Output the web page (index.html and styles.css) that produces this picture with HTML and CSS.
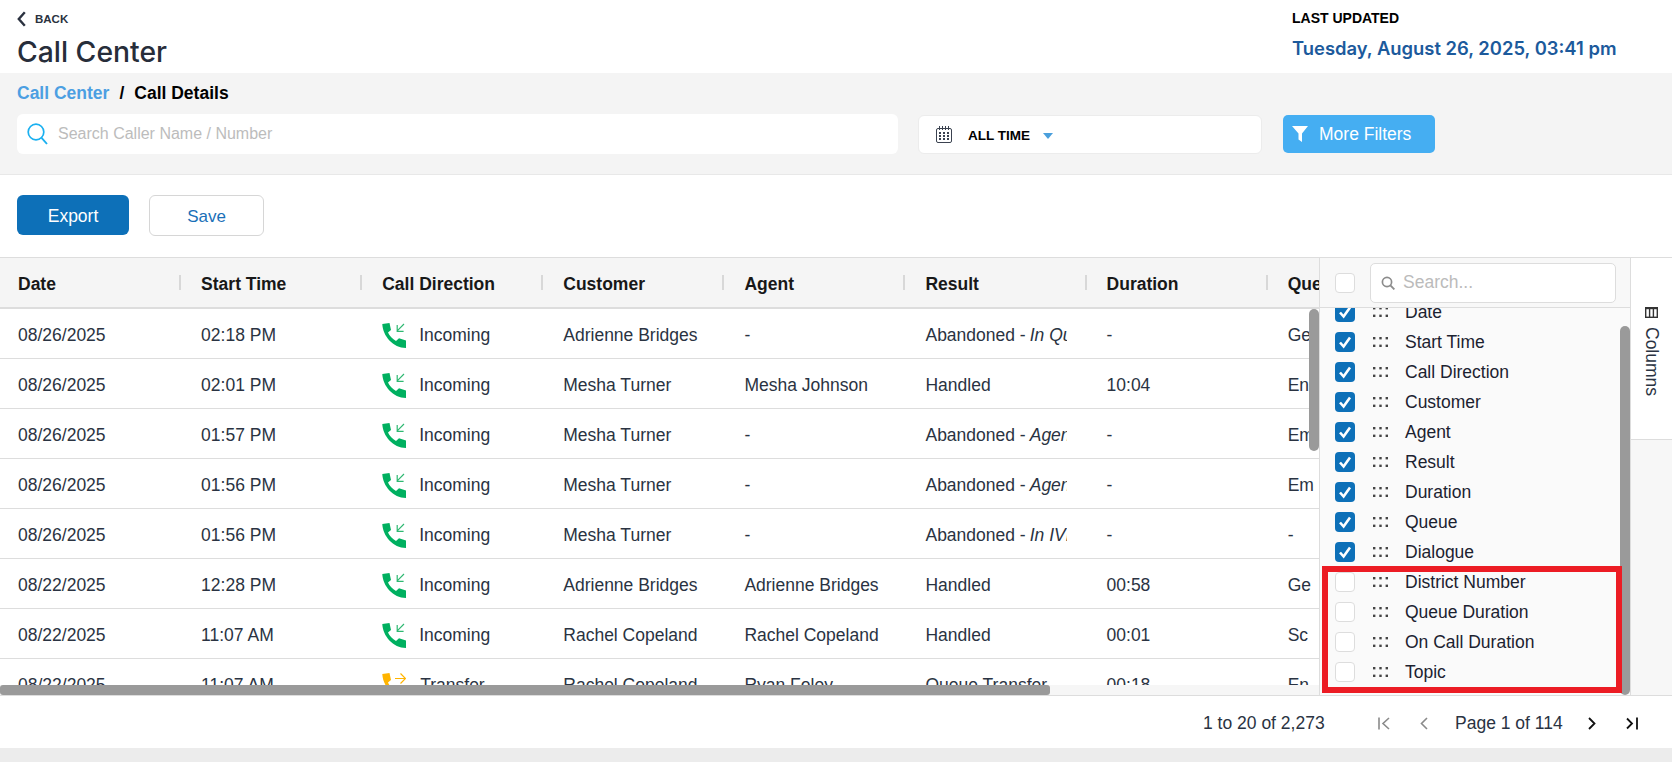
FILE: index.html
```html
<!DOCTYPE html>
<html lang="en">
<head>
<meta charset="utf-8">
<title>Call Center</title>
<link rel="stylesheet" href="styles.css">
</head>
<body>
<svg class="defs" width="0" height="0" aria-hidden="true">
  <symbol id="ph-in" viewBox="0 0 24 25">
    <path fill="#00b060" d="M0.3 1 L7.5 0 L9 7 L6 9.5 C7.5 13 10.5 16 14 18 L17 15.3 L24 17.5 V25 C11 25 0.8 13 0.3 1Z"/>
    <path fill="none" stroke="#2fb872" stroke-width="1.2" d="M22 1 L15.2 7.8 M15.2 2 V8.4 H21.6"/>
  </symbol>
  <symbol id="ph-tr" viewBox="0 0 24 25">
    <path fill="#ffb400" d="M0.3 1 L7.5 0 L9 7 L6 9.5 C7.5 13 10.5 16 14 18 L17 15.3 L24 17.5 V25 C11 25 0.8 13 0.3 1Z"/>
    <path fill="none" stroke="#ffb400" stroke-width="1.2" d="M13 5.5 H23.5 M18.5 0.5 L23.5 5.5 L18.5 10.5"/>
  </symbol>
  <symbol id="grip" viewBox="0 0 15 10">
    <g fill="#444"><rect x="0" y="0" width="2.4" height="2.4"/><rect x="6.3" y="0" width="2.4" height="2.4"/><rect x="12.6" y="0" width="2.4" height="2.4"/><rect x="0" y="7.6" width="2.4" height="2.4"/><rect x="6.3" y="7.6" width="2.4" height="2.4"/><rect x="12.6" y="7.6" width="2.4" height="2.4"/></g>
  </symbol>
  <symbol id="chk" viewBox="0 0 20 20">
    <path fill="none" stroke="#fff" stroke-width="2.6" d="M5 10.5 L8.6 14.5 L15 5.5"/>
  </symbol>
</svg>

<header class="top">
  <div class="top-left">
    <div class="back">
      <svg class="back-ic" viewBox="0 0 9 16"><path fill="none" stroke="#2b3240" stroke-width="2.4" d="M7.8 1.2 L1.8 8 L7.8 14.8"/></svg>
      <span>BACK</span>
    </div>
    <h1 class="title">Call Center</h1>
  </div>
  <div class="updated">
    <div class="updated-label">LAST UPDATED</div>
    <div class="updated-date">Tuesday, August 26, 2025, 03:41 pm</div>
  </div>
</header>

<section class="filters">
  <nav class="crumbs"><span class="crumb-link">Call Center</span><span class="crumb-sep">/</span><span class="crumb-now">Call Details</span></nav>
  <div class="filter-row">
    <div class="search">
      <svg class="search-ic" viewBox="0 0 21 22"><circle cx="9" cy="9" r="7.8" fill="none" stroke="#1ab0f0" stroke-width="1.7"/><path stroke="#1ab0f0" stroke-width="1.9" d="M14.6 14.8 L20 21"/></svg>
      <span class="search-ph">Search Caller Name / Number</span>
    </div>
    <div class="date-box">
      <svg class="cal-ic" viewBox="0 0 16 17"><g fill="none" stroke="#3b4250"><rect x="0.5" y="2.5" width="15" height="14" rx="1.5"/><path d="M3.5 0 V4 M6.5 0 V4 M9.5 0 V4 M12.5 0 V4"/></g><g fill="#3b4250"><rect x="3" y="6" width="2" height="2"/><rect x="7" y="6" width="2" height="2"/><rect x="11" y="6" width="2" height="2"/><rect x="3" y="9" width="2" height="2"/><rect x="7" y="9" width="2" height="2"/><rect x="11" y="9" width="2" height="2"/><rect x="3" y="12" width="2" height="2"/><rect x="7" y="12" width="2" height="2"/><rect x="11" y="12" width="2" height="2"/></g></svg>
      <span class="date-label">ALL TIME</span>
      <span class="caret"></span>
    </div>
    <div class="more">
      <svg class="funnel" viewBox="0 0 16 16"><path fill="#fff" d="M0 0 H16 L10 7.5 V16 L6.5 13.5 V7.5Z"/></svg>
      <span>More Filters</span>
    </div>
  </div>
</section>

<section class="actions">
  <div class="btn btn-primary">Export</div>
  <div class="btn btn-outline">Save</div>
</section>

<section class="grid-shell">
  <div class="grid-main">
    <div class="grow ghead">
      <div class="hcell">Date</div><div class="hcell">Start Time</div><div class="hcell">Call Direction</div><div class="hcell">Customer</div><div class="hcell">Agent</div><div class="hcell">Result</div><div class="hcell">Duration</div><div class="hcell">Queue</div>
    </div>
    <div class="gbody">
      <div class="grow"><div class="cell">08/26/2025</div><div class="cell">02:18 PM</div><div class="cell dir"><svg class="ph"><use href="#ph-in"/></svg>Incoming</div><div class="cell">Adrienne Bridges</div><div class="cell">-</div><div class="cell">Abandoned - <i>In Queue</i></div><div class="cell">-</div><div class="cell">Ge</div></div>
      <div class="grow"><div class="cell">08/26/2025</div><div class="cell">02:01 PM</div><div class="cell dir"><svg class="ph"><use href="#ph-in"/></svg>Incoming</div><div class="cell">Mesha Turner</div><div class="cell">Mesha Johnson</div><div class="cell">Handled</div><div class="cell">10:04</div><div class="cell">En</div></div>
      <div class="grow"><div class="cell">08/26/2025</div><div class="cell">01:57 PM</div><div class="cell dir"><svg class="ph"><use href="#ph-in"/></svg>Incoming</div><div class="cell">Mesha Turner</div><div class="cell">-</div><div class="cell">Abandoned - <i>Agent</i></div><div class="cell">-</div><div class="cell">Em</div></div>
      <div class="grow"><div class="cell">08/26/2025</div><div class="cell">01:56 PM</div><div class="cell dir"><svg class="ph"><use href="#ph-in"/></svg>Incoming</div><div class="cell">Mesha Turner</div><div class="cell">-</div><div class="cell">Abandoned - <i>Agent</i></div><div class="cell">-</div><div class="cell">Em</div></div>
      <div class="grow"><div class="cell">08/26/2025</div><div class="cell">01:56 PM</div><div class="cell dir"><svg class="ph"><use href="#ph-in"/></svg>Incoming</div><div class="cell">Mesha Turner</div><div class="cell">-</div><div class="cell">Abandoned - <i>In IVR</i></div><div class="cell">-</div><div class="cell">-</div></div>
      <div class="grow"><div class="cell">08/22/2025</div><div class="cell">12:28 PM</div><div class="cell dir"><svg class="ph"><use href="#ph-in"/></svg>Incoming</div><div class="cell">Adrienne Bridges</div><div class="cell">Adrienne Bridges</div><div class="cell">Handled</div><div class="cell">00:58</div><div class="cell">Ge</div></div>
      <div class="grow"><div class="cell">08/22/2025</div><div class="cell">11:07 AM</div><div class="cell dir"><svg class="ph"><use href="#ph-in"/></svg>Incoming</div><div class="cell">Rachel Copeland</div><div class="cell">Rachel Copeland</div><div class="cell">Handled</div><div class="cell">00:01</div><div class="cell">Sc</div></div>
      <div class="grow"><div class="cell">08/22/2025</div><div class="cell">11:07 AM</div><div class="cell dir dir-tr"><svg class="ph"><use href="#ph-tr"/></svg>Transfer</div><div class="cell">Rachel Copeland</div><div class="cell">Ryan Foley</div><div class="cell">Queue Transfer</div><div class="cell">00:18</div><div class="cell">En</div></div>
    </div>
    <div class="hbar"><div class="hthumb"></div></div>
    <div class="vthumb"></div>
  </div>

  <aside class="panel">
    <div class="panel-head">
      <span class="box"></span>
      <div class="panel-search">
        <svg class="ps-ic" viewBox="0 0 14 14"><circle cx="6" cy="6" r="4.6" fill="none" stroke="#8c8c8c" stroke-width="1.7"/><path stroke="#8c8c8c" stroke-width="1.9" d="M9.4 9.4 L13.4 13.4"/></svg>
        <span>Search...</span>
      </div>
    </div>
    <div class="panel-list">
      <div class="pitems">
        <div class="pitem"><span class="box on"><svg class="chk"><use href="#chk"/></svg></span><svg class="grip"><use href="#grip"/></svg><span>Date</span></div>
        <div class="pitem"><span class="box on"><svg class="chk"><use href="#chk"/></svg></span><svg class="grip"><use href="#grip"/></svg><span>Start Time</span></div>
        <div class="pitem"><span class="box on"><svg class="chk"><use href="#chk"/></svg></span><svg class="grip"><use href="#grip"/></svg><span>Call Direction</span></div>
        <div class="pitem"><span class="box on"><svg class="chk"><use href="#chk"/></svg></span><svg class="grip"><use href="#grip"/></svg><span>Customer</span></div>
        <div class="pitem"><span class="box on"><svg class="chk"><use href="#chk"/></svg></span><svg class="grip"><use href="#grip"/></svg><span>Agent</span></div>
        <div class="pitem"><span class="box on"><svg class="chk"><use href="#chk"/></svg></span><svg class="grip"><use href="#grip"/></svg><span>Result</span></div>
        <div class="pitem"><span class="box on"><svg class="chk"><use href="#chk"/></svg></span><svg class="grip"><use href="#grip"/></svg><span>Duration</span></div>
        <div class="pitem"><span class="box on"><svg class="chk"><use href="#chk"/></svg></span><svg class="grip"><use href="#grip"/></svg><span>Queue</span></div>
        <div class="pitem"><span class="box on"><svg class="chk"><use href="#chk"/></svg></span><svg class="grip"><use href="#grip"/></svg><span>Dialogue</span></div>
        <div class="pitem"><span class="box"></span><svg class="grip"><use href="#grip"/></svg><span>District Number</span></div>
        <div class="pitem"><span class="box"></span><svg class="grip"><use href="#grip"/></svg><span>Queue Duration</span></div>
        <div class="pitem"><span class="box"></span><svg class="grip"><use href="#grip"/></svg><span>On Call Duration</span></div>
        <div class="pitem"><span class="box"></span><svg class="grip"><use href="#grip"/></svg><span>Topic</span></div>
      </div>
      <div class="pthumb"></div>
    </div>
    <div class="redbox"></div>
  </aside>

  <div class="side">
    <div class="side-tab">
      <svg class="cols-ic" viewBox="0 0 13 11"><g fill="none" stroke="#333" stroke-width="1.4"><rect x="0.7" y="0.7" width="11.6" height="9.6"/><path d="M4.6 1 V10 M8.4 1 V10"/></g><rect width="13" height="2.2" fill="#333"/></svg>
      <span class="cols-label">Columns</span>
    </div>
  </div>
</section>

<footer class="pager">
  <span class="count">1 to 20 of 2,273</span>
  <svg class="pg pg-first" viewBox="0 0 12 13"><path fill="none" stroke="#8a8a8a" stroke-width="1.6" d="M1 0.5 V12.5 M11 1 L5 6.5 L11 12"/></svg>
  <svg class="pg pg-prev" viewBox="0 0 8 13"><path fill="none" stroke="#8a8a8a" stroke-width="1.6" d="M7 1 L1.5 6.5 L7 12"/></svg>
  <span class="page-text">Page 1 of 114</span>
  <svg class="pg pg-next" viewBox="0 0 8 13"><path fill="none" stroke="#111" stroke-width="1.8" d="M1 1 L6.5 6.5 L1 12"/></svg>
  <svg class="pg pg-last" viewBox="0 0 12 13"><path fill="none" stroke="#111" stroke-width="1.8" d="M1 1.5 L6 6.5 L1 11.5 M11 0.5 V12.5"/></svg>
</footer>
<div class="bottom-strip"></div>
</body>
</html>
```

FILE: styles.css
```css
* { box-sizing: border-box; }
html, body { margin: 0; padding: 0; }
body {
  width: 1672px;
  height: 762px;
  overflow: hidden;
  background: #fff;
  font-family: "Liberation Sans", Arial, sans-serif;
  font-size: 17.5px;
  color: #2a3342;
  display: flex;
  flex-direction: column;
}
.defs { position: absolute; }

/* header */
.top {
  height: 73px;
  flex: none;
  display: flex;
  justify-content: space-between;
  padding: 11px 0 0 17px;
}
.back { display: flex; align-items: center; gap: 9px; height: 16px; font-size: 11.5px; font-weight: 700; color: #2b3240; }
.back-ic { width: 9px; height: 16px; }
.title { margin: 9px 0 0; font-family: Inter, sans-serif; font-weight: 500; font-size: 28.3px; line-height: 32px; color: #272d3a; }
.updated { width: 380px; }
.updated-label { font-size: 14px; font-weight: 700; color: #000; line-height: 14px; }
.updated-date { margin-top: 11px; font-family: Inter, sans-serif; font-weight: 600; font-size: 18.4px; line-height: 24px; color: #1c5a9c; }

/* filter bar */
.filters {
  height: 102px;
  flex: none;
  background: #f4f4f4;
  border-bottom: 1px solid #e8e8e8;
  padding: 10px 0 0 17px;
}
.crumbs { display: flex; gap: 10px; font-weight: 700; font-size: 17.5px; line-height: 20px; color: #000; }
.crumb-link { color: #4c9fe2; }
.filter-row { display: flex; align-items: center; margin-top: 11px; }
.search {
  width: 881px; height: 40px;
  background: #fff; border-radius: 6px;
  display: flex; align-items: center;
  padding-left: 10px;
}
.search-ic { width: 21px; height: 22px; }
.search-ph { margin-left: 10px; font-size: 16px; color: #bcbcbc; }
.date-box {
  width: 344px; height: 39px; margin-left: 20px;
  background: #fff; border: 1px solid #ececec; border-radius: 6px;
  display: flex; align-items: center; padding-left: 17px;
}
.cal-ic { width: 16px; height: 17px; }
.date-label { margin: 2px 0 0 16px; font-size: 13.5px; font-weight: 700; color: #000; }
.caret { margin-left: 13px; margin-top: 3px; border-left: 5px solid transparent; border-right: 5px solid transparent; border-top: 6px solid #4a9fdc; }
.more {
  width: 152px; height: 38px; margin-left: 21px;
  background: #45aef2; border-radius: 5px;
  display: flex; align-items: center; padding-left: 9px; gap: 11px;
  color: #fff; font-size: 17.5px;
}
.funnel { width: 16px; height: 16px; }

/* actions */
.actions { height: 82px; flex: none; display: flex; align-items: flex-start; gap: 20px; padding: 20px 0 0 17px; }
.btn { height: 40px; padding-top: 2px; border-radius: 6px; display: flex; align-items: center; justify-content: center; font-size: 17.5px; }
.btn-primary { width: 112px; background: #0d70b8; color: #fff; }
.btn-outline { width: 115px; height: 41px; background: #fff; border: 1px solid #d6d6d6; color: #1a70b8; font-size: 17px; }

/* grid */
.grid-shell { height: 439px; flex: none; display: flex; border-top: 1px solid #ddd; border-bottom: 1px solid #ddd; position: relative; }
.grid-main { width: 1319px; flex: none; position: relative; overflow: hidden; }
.grow { display: grid; grid-template-columns: repeat(8, 181.1px); height: 50px; border-bottom: 1px solid #ddd; }
.ghead { background: #f5f5f5; height: 51px; border-bottom: 2px solid #ddd; }
.hcell { position: relative; display: flex; align-items: center; padding: 3px 0 0 20px; font-weight: 700; color: #181818; }
.hcell:first-child, .cell:first-child { padding-left: 18px; }
.hcell::after { content: ""; position: absolute; right: 0; top: 17px; width: 2px; height: 15px; background: #d8d8d8; }
.gbody { height: 376px; overflow: hidden; }
.cell { display: flex; align-items: center; gap: 4px; padding: 3px 0 0 20px; width: 162px; overflow: hidden; white-space: nowrap; }
.cell i { font-style: italic; }
.dir { gap: 13px; width: 181px; }
.dir-tr { gap: 14px; }
.ph { width: 24px; height: 25px; flex: none; }
.hbar { height: 10px; background: #f6f6f6; }
.hthumb { width: 1050px; height: 10px; background: #9a9a9a; border-radius: 3px; }
.vthumb { position: absolute; left: 1309px; top: 51px; width: 10px; height: 142px; background: #9a9a9a; border-radius: 5px; }

/* column panel */
.panel { width: 312px; flex: none; border-left: 1px solid #ddd; border-right: 1px solid #ddd; background: #fafafa; display: flex; flex-direction: column; position: relative; }
.panel-head { height: 50px; flex: none; display: flex; align-items: center; gap: 15px; padding-left: 15px; border-bottom: 1px solid #ddd; background: #f8f8f8; }
.panel-search { width: 246px; height: 40px; background: #fff; border: 1px solid #ddd; border-radius: 5px; display: flex; align-items: center; gap: 8px; padding-left: 10px; color: #bbb; }
.ps-ic { width: 14px; height: 14px; }
.box { width: 20px; height: 20px; flex: none; border-radius: 4px; border: 1px solid #ddd; background: #fff; display: block; }
.box.on { background: #0d70b8; border: none; }
.chk { width: 20px; height: 20px; display: block; }
.panel-list { flex: 1; position: relative; overflow: hidden; }
.pitems { margin-top: -11px; }
.pitem { height: 30px; display: flex; align-items: center; padding-left: 15px; color: #1c2230; }
.grip { width: 15px; height: 10px; margin-left: 18px; margin-right: 17px; }
.pthumb { position: absolute; right: 0; top: 18px; width: 10px; height: 369px; background: #9a9a9a; border-radius: 5px; }
.redbox { position: absolute; left: 2px; top: 308px; width: 300px; height: 127px; border: 6px solid #ec1c24; pointer-events: none; }

/* side tab */
.side { flex: 1; background: #f7f7f7; }
.side-tab { height: 182px; background: #fff; border-bottom: 1px solid #ddd; display: flex; flex-direction: column; align-items: center; padding-top: 49px; gap: 9px; }
.cols-ic { width: 13px; height: 11px; }
.cols-label { writing-mode: vertical-rl; line-height: 16px; }

/* pager */
.pager { height: 52px; flex: none; display: flex; align-items: center; padding: 2px 0 0 1203px; }
.count { width: 175px; }
.pg { height: 13px; flex: none; }
.pg-first { width: 12px; }
.pg-prev { width: 8px; margin-left: 30px; }
.page-text { margin-left: 27px; width: 106px; white-space: nowrap; }
.pg-next { width: 8px; margin-left: 27px; }
.pg-last { width: 12px; margin-left: 30px; }
.bottom-strip { flex: 1; background: #ececec; }
```
